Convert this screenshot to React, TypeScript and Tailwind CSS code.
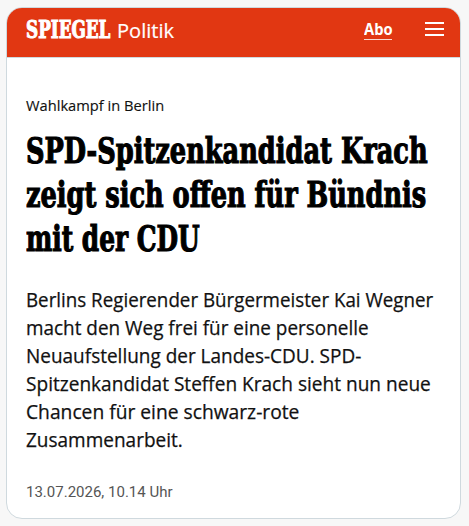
const headline = [
  { text: "SPD-Spitzenkandidat Krach", fit: "scale-x-[0.733]" },
  { text: "zeigt sich offen für Bündnis", fit: "scale-x-[0.732]" },
  { text: "mit der CDU", fit: "scale-x-[0.71]" },
];

const intro = [
  { text: "Berlins Regierender Bürgermeister Kai Wegner", fit: "scale-x-[0.962]" },
  { text: "macht den Weg frei für eine personelle", fit: "scale-x-[0.97]" },
  { text: "Neuaufstellung der Landes-CDU. SPD-", fit: "scale-x-[0.973]" },
  { text: "Spitzenkandidat Steffen Krach sieht nun neue", fit: "scale-x-[0.978]" },
  { text: "Chancen für eine schwarz-rote", fit: "scale-x-[0.986]" },
  { text: "Zusammenarbeit.", fit: "scale-x-[0.974]" },
];

function Line({ text, fit }: { text: string; fit: string }) {
  return <span className={`block w-max origin-left whitespace-nowrap ${fit}`}>{text}</span>;
}

export default function App() {
  return (
    <div className="h-[526px] w-[469px] overflow-hidden bg-[#f7f7f7] pl-[6px] pt-[7px] font-['Open_Sans',sans-serif]">
      <article className="flex h-[512px] w-[455px] flex-col overflow-hidden rounded-[16px] border border-[#cfd9de] bg-white">
        <header className="flex h-[50px] shrink-0 items-start border-b border-[#cfd9de] bg-[#e13712] pl-[19px] text-white">
          <div className="mt-[9px] w-[91px] font-['DejaVu_Serif',serif] text-[23.5px] font-bold leading-[26px]">
            <span className="block w-max origin-left scale-x-[0.715] [-webkit-text-stroke:1.1px_white]">SPIEGEL</span>
          </div>
          <span className="mt-[10px] block w-[247px] text-[19.5px] leading-[26px]">
            <span className="block w-max origin-left scale-x-[1.03] [-webkit-text-stroke:0.2px_white]">Politik</span>
          </span>
          <a className="mt-[11px] block h-[21px] w-[28px] border-b border-white/80 text-[15.5px] font-bold leading-[20px]">
            <span className="block w-max origin-left scale-x-[0.95]">Abo</span>
          </a>
          <div className="ml-[33px] mt-[13.5px] flex w-[19px] flex-col gap-[4px]">
            <i className="h-[2px] bg-white" />
            <i className="h-[2px] bg-white" />
            <i className="h-[2px] bg-white" />
          </div>
        </header>
        <div className="pl-[19px] text-[#111]">
          <p className="mt-[37px] text-[15px] leading-[20px] [-webkit-text-stroke:0.15px_#111]">
            <Line text="Wahlkampf in Berlin" fit="scale-x-[0.978]" />
          </p>
          <h1 className="mt-[14px] font-['DejaVu_Serif',serif] text-[35px] font-bold leading-[44px] text-black [-webkit-text-stroke:1.2px_black]">
            {headline.map((l) => <Line key={l.text} {...l} />)}
          </h1>
          <p className="mt-[25px] text-[19.5px] leading-[28px] [-webkit-text-stroke:0.25px_#111]">
            {intro.map((l) => <Line key={l.text} {...l} />)}
          </p>
          <p className="mt-[28px] font-[Roboto,sans-serif] text-[15px] leading-[20px] text-[#555]">
            <Line text="13.07.2026, 10.14 Uhr" fit="scale-x-[1]" />
          </p>
        </div>
      </article>
    </div>
  );
}
